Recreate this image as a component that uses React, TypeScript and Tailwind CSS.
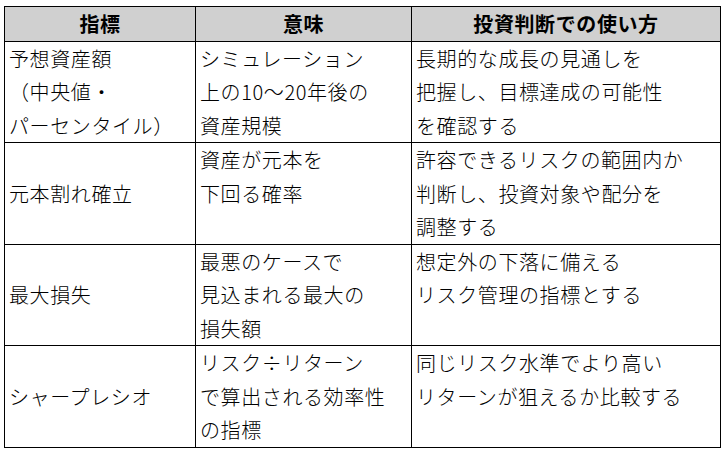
const rows: { term: string[]; meaning: string[]; usage: string[] }[] = [
  {
    term: ['予想資産額', '（中央値・', 'パーセンタイル）'],
    meaning: ['シミュレーション', '上の10〜20年後の', '資産規模'],
    usage: ['長期的な成長の見通しを', '把握し、目標達成の可能性', 'を確認する'],
  },
  {
    term: ['元本割れ確立'],
    meaning: ['資産が元本を', '下回る確率'],
    usage: ['許容できるリスクの範囲内か', '判断し、投資対象や配分を', '調整する'],
  },
  {
    term: ['最大損失'],
    meaning: ['最悪のケースで', '見込まれる最大の', '損失額'],
    usage: ['想定外の下落に備える', 'リスク管理の指標とする'],
  },
  {
    term: ['シャープレシオ'],
    meaning: ['リスク÷リターン', 'で算出される効率性', 'の指標'],
    usage: ['同じリスク水準でより高い', 'リターンが狙えるか比較する'],
  },
];

function Lines({ lines }: { lines: string[] }) {
  return (
    <>
      {lines.map((l, i) => (
        <div key={i}>{l}</div>
      ))}
    </>
  );
}

const cell = 'border border-black px-[4px] py-0 whitespace-nowrap';

export default function App() {
  return (
    <div
      className="min-h-screen bg-white pt-[6px] pl-[4px] text-black"
      style={{ fontFamily: '"Noto Sans CJK JP", "Noto Sans", sans-serif' }}
    >
      <table className="table-fixed border-collapse text-[20px] leading-[33.5px] tracking-[0.6px]">
        <colgroup>
          <col className="w-[191px]" />
          <col className="w-[216px]" />
          <col className="w-[309px]" />
        </colgroup>
        <thead>
          <tr className="h-[33px] bg-[#d0d0d0]">
            <th className={`${cell} text-center font-bold`}>指標</th>
            <th className={`${cell} text-center font-bold`}>意味</th>
            <th className={`${cell} text-center font-bold`}>投資判断での使い方</th>
          </tr>
        </thead>
        <tbody className="font-light">
          {rows.map((r, i) => (
            <tr key={i} className="h-[101.5px]">
              <td className={`${cell} align-middle`}>
                <Lines lines={r.term} />
              </td>
              <td className={`${cell} align-top`}>
                <Lines lines={r.meaning} />
              </td>
              <td className={`${cell} align-top`}>
                <Lines lines={r.usage} />
              </td>
            </tr>
          ))}
        </tbody>
      </table>
    </div>
  );
}
